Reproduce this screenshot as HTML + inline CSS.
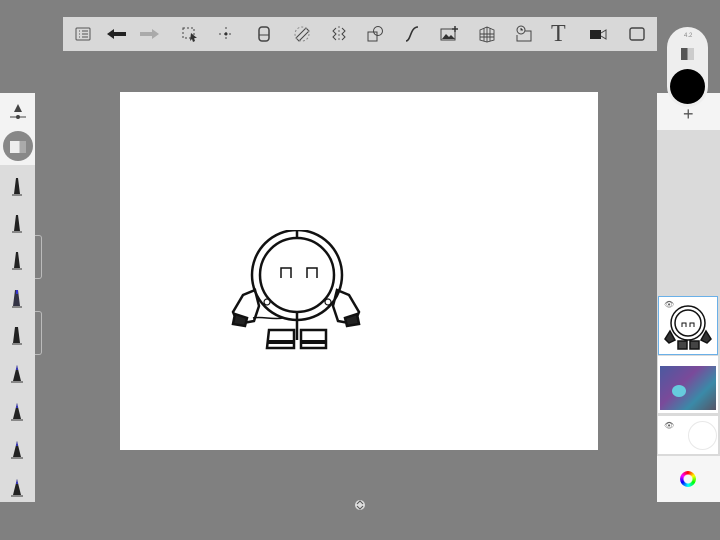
<!DOCTYPE html>
<html><head><style>
body{margin:0;width:720px;height:540px;background:#808080;position:relative;overflow:hidden;font-family:"Liberation Sans",sans-serif}
.a{position:absolute}
.tb{left:63px;top:17px;width:594px;height:34px;background:#d8d8d8}
.ic{position:absolute;top:8px;width:18px;height:18px}
</style></head><body>
<div class="a tb">
<svg class="ic" style="left:11px" viewBox="0 0 18 18"><rect x="2" y="3" width="14" height="12" rx="1" fill="none" stroke="#555"/><path d="M5 6h1M8 6h6M5 9h1M8 9h6M5 12h1M8 12h6" stroke="#555"/></svg>
<svg class="ic" style="left:43px;width:22px" viewBox="0 0 22 18"><path d="M1 9l7-5v3h12v4H8v3z" fill="#222"/></svg>
<svg class="ic" style="left:75px;width:22px" viewBox="0 0 22 18"><path d="M21 9l-7-5v3H2v4h12v3z" fill="#aaa"/></svg>
<svg class="ic" style="left:118px" viewBox="0 0 18 18"><rect x="2" y="3" width="11" height="10" fill="none" stroke="#444" stroke-dasharray="2 2"/><path d="M10 8l6 5-3 0 1 3-2 1-1-3-2 2z" fill="#333"/></svg>
<svg class="ic" style="left:154px" viewBox="0 0 18 18"><path d="M9 2v14M2 9h14" stroke="#444" stroke-dasharray="2 3"/><circle cx="9" cy="9" r="1.5" fill="#333"/></svg>
<svg class="ic" style="left:192px" viewBox="0 0 18 18"><rect x="4" y="2" width="10" height="14" rx="3" fill="none" stroke="#444" stroke-width="1.5"/><path d="M4 10h10" stroke="#444"/></svg>
<svg class="ic" style="left:230px" viewBox="0 0 18 18"><path d="M3 13L13 3l3 3L6 16z" fill="none" stroke="#444"/><circle cx="9" cy="9" r="7" fill="none" stroke="#888" stroke-dasharray="2 2"/></svg>
<svg class="ic" style="left:267px" viewBox="0 0 18 18"><path d="M9 1v16" stroke="#666" stroke-dasharray="2 2"/><path d="M6 3l-3 3 3 3-3 3 3 3M12 3l3 3-3 3 3 3-3 3" fill="none" stroke="#444"/></svg>
<svg class="ic" style="left:303px" viewBox="0 0 18 18"><rect x="2" y="7" width="9" height="9" fill="none" stroke="#444"/><circle cx="12" cy="6" r="4.5" fill="none" stroke="#444"/></svg>
<svg class="ic" style="left:340px" viewBox="0 0 18 18"><path d="M3 16c5 0 4-14 12-14" fill="none" stroke="#333" stroke-width="1.6"/></svg>
<svg class="ic" style="left:377px" viewBox="0 0 18 18"><rect x="1" y="4" width="14" height="11" fill="none" stroke="#444"/><path d="M2 14l4-5 3 3 2-2 4 4z" fill="#333"/><path d="M15 1v6M12 4h6" stroke="#333" stroke-width="1.5"/></svg>
<svg class="ic" style="left:415px" viewBox="0 0 18 18"><path d="M2 5l7-3 7 3v10l-7 2-7-2zM2 9l14 0M2 12h14M6 3v13M9 2v15M12 3v13" fill="none" stroke="#444" stroke-width=".9"/></svg>
<svg class="ic" style="left:452px" viewBox="0 0 18 18"><circle cx="6" cy="5" r="4" fill="none" stroke="#444"/><path d="M6 3v2h2" stroke="#444"/><path d="M10 6h6v10H2v-6" fill="none" stroke="#444"/></svg>
<div class="a" style="left:488px;top:4px;font:24px 'Liberation Serif',serif;color:#444">T</div>
<svg class="ic" style="left:526px" viewBox="0 0 18 18"><rect x="1" y="5" width="11" height="9" fill="#222"/><path d="M12 8l5-3v9l-5-3" fill="none" stroke="#444"/></svg>
<svg class="ic" style="left:565px" viewBox="0 0 18 18"><rect x="2" y="3" width="14" height="12" rx="2" fill="none" stroke="#444" stroke-width="1.4"/></svg>
</div>

<div class="a" style="left:0;top:93px;width:35px;height:409px;background:#dcdcdc"></div>
<div class="a" style="left:0;top:93px;width:35px;height:72px;background:#f3f3f3"></div>
<svg class="a" style="left:8px;top:101px" width="20" height="20" viewBox="0 0 20 20"><path d="M10 3l4 8H6z" fill="#444"/><path d="M2 16h16" stroke="#444"/><circle cx="10" cy="16" r="2" fill="#444"/></svg>
<div class="a" style="left:3px;top:131px;width:30px;height:30px;border-radius:50%;background:#888"><div class="a" style="left:7px;top:10px;width:16px;height:12px;background:linear-gradient(90deg,#eee 60%,#aaa 60%)"></div></div>
<svg class="a" style="left:0;top:170px" width="35" height="330" viewBox="0 0 35 330">
<g fill="#222"><path d="M16 8l2 0 2 16h-6z"/><path d="M16 45l2 0 2 16h-6z"/><path d="M16 82l2 0 2 16h-6z"/><path d="M15 120l3 0 2 16h-7z" fill="#334"/><path d="M15 157l3 0 2 16h-7z"/><path d="M17 195l4 16h-8z"/><path d="M17 233l4 16h-8z"/><path d="M17 271l4 16h-8z"/><path d="M17 309l4 16h-8z"/></g>
<g stroke="#333"><path d="M12 25h10M12 62h10M12 99h10M12 137h10M12 174h10M11 212h12M11 250h12M11 288h12M11 326h12"/></g>
<g fill="#33c"><path d="M17 195l1 5h-2zM17 233l1 5h-2zM17 271l1 5h-2zM17 309l1 5h-2zM16 120h2v4h-2z"/></g></svg>
<div class="a" style="left:35px;top:235px;width:6px;height:42px;border:1px solid #bbb;border-left:none;border-radius:0 3px 3px 0"></div>
<div class="a" style="left:35px;top:311px;width:6px;height:42px;border:1px solid #bbb;border-left:none;border-radius:0 3px 3px 0"></div>

<div class="a" style="left:120px;top:92px;width:478px;height:358px;background:#fff"></div>
<svg class="a" style="left:225px;top:230px" width="145" height="125" viewBox="0 0 145 125" fill="none" stroke="#111" stroke-width="2.5">
<circle cx="72" cy="45" r="45"/><circle cx="72" cy="45" r="37"/>
<path d="M72 0v8M72 82v28"/>
<path d="M56 48V38h10v10M82 48V38h10v10" stroke-width="1.5"/>
<circle cx="42" cy="72" r="3" stroke-width="1.2"/><circle cx="103" cy="72" r="3" stroke-width="1.2"/>
<path d="M28 88c8-2 20 2 30 0" stroke-width="1.5"/>
<path d="M30 60l-12 5-10 17 5 12 16-3 5-15z"/><path d="M10 84l12 4-2 8-12-2z" fill="#222"/>
<path d="M112 60l12 5 10 17-5 12-16-3-5-15z"/><path d="M132 84l-12 4 2 8 12-2z" fill="#222"/>
<path d="M44 100h25v18H42z"/><path d="M76 100h25v18H76z"/><path d="M42 112h27M76 112h25" stroke-width="4"/>
</svg>
<svg class="a" style="left:354px;top:499px" width="12" height="12" viewBox="0 0 12 12"><circle cx="6" cy="6" r="5" fill="#ddd"/><path d="M3 5l3-3 3 3M3 7l3 3 3-3" stroke="#555" fill="none"/></svg>

<div class="a" style="left:657px;top:93px;width:63px;height:409px;background:#dadada"></div>
<div class="a" style="left:657px;top:93px;width:63px;height:37px;background:#f4f4f4"></div>
<div class="a" style="left:683px;top:104px;font-size:18px;color:#555">+</div>
<div class="a" style="left:667px;top:27px;width:41px;height:80px;border-radius:21px;background:#eee"></div>
<div class="a" style="left:684px;top:33px;font-size:6px;color:#888">4.2</div>
<div class="a" style="left:681px;top:48px;width:13px;height:12px;background:linear-gradient(90deg,#555 50%,#ccc 50%)"></div>
<div class="a" style="left:670px;top:69px;width:35px;height:35px;border-radius:50%;background:#000"></div>
<div class="a" style="left:658px;top:296px;width:58px;height:57px;background:#fff;border:1px solid #6ab0e8"></div>
<svg class="a" style="left:660px;top:303px" width="56" height="50" viewBox="0 0 56 50" fill="none" stroke="#111" stroke-width="1.5"><circle cx="28" cy="20" r="17"/><circle cx="28" cy="20" r="13"/><path d="M22 24v-4h4v4M30 24v-4h4v4" stroke-width="1"/><path d="M10 28l-5 8 4 4 6-3zM46 28l5 8-4 4-6-3z" fill="#333"/><path d="M18 38h9v8h-9zM30 38h9v8h-9z" fill="#444"/></svg>
<div class="a" style="left:664px;top:300px;font-size:8px;color:#666">👁</div>
<div class="a" style="left:658px;top:356px;width:60px;height:57px;background:#fff"></div>
<div class="a" style="left:660px;top:366px;width:56px;height:44px;background:linear-gradient(135deg,#4a5aa0,#7a4a9a 40%,#3a8aa8 70%,#556)"></div>
<div class="a" style="left:672px;top:385px;width:14px;height:12px;border-radius:50%;background:#6cd"></div>
<div class="a" style="left:658px;top:416px;width:60px;height:38px;background:#fff"></div>
<div class="a" style="left:688px;top:421px;width:27px;height:27px;border-radius:50%;border:1px solid #e8e8e8"></div>
<div class="a" style="left:664px;top:421px;font-size:8px;color:#666">👁</div>
<div class="a" style="left:657px;top:456px;width:63px;height:46px;background:#f6f6f6"></div>
<div class="a" style="left:680px;top:471px;width:10px;height:10px;border-radius:50%;border:3px solid transparent;background:conic-gradient(red,yellow,lime,cyan,blue,magenta,red) border-box;-webkit-mask:radial-gradient(circle,transparent 4px,#000 5px)"></div>
</body></html>
